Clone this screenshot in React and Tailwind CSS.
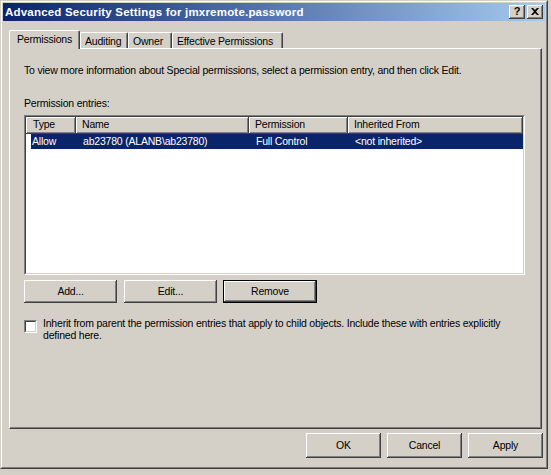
import React from "react";

const raised =
  "shadow-[inset_-1px_-1px_0_#404040,inset_1px_1px_0_#ffffff,inset_-2px_-2px_0_#808080]";

function Button({ label, className = "", isDefault = false }) {
  return (
    <div
      className={`flex items-center justify-center bg-[#d4d0c8] ${raised} ${
        isDefault ? "border border-black" : ""
      } ${className}`}
    >
      <span className="leading-[13px]">{label}</span>
    </div>
  );
}

function Tab({ label, selected, w }) {
  return (
    <div
      className={`relative flex bg-[#d4d0c8] border-t border-l border-white border-r border-r-[#404040] rounded-tl-[2px] rounded-tr-[2px] shadow-[inset_-1px_0_0_#808080] ${
        selected ? "h-[19px] -mb-px z-10 pl-[7px] pt-[2px]" : "h-[16px] pl-[4px] pt-[2px]"
      }`}
      style={{ width: w }}
    >
      <span className="leading-[13px]">{label}</span>
    </div>
  );
}

function HeaderCell({ label, w, pl = "pl-[6px]" }) {
  return (
    <div
      className={`h-[17px] shrink-0 flex items-start pt-[1px] ${pl} bg-[#d4d0c8] ${raised}`}
      style={{ width: w }}
    >
      <span className="leading-[13px]">{label}</span>
    </div>
  );
}

export default function App() {
  return (
    <div className="w-[551px] h-[475px] bg-[#d4d0c8] font-['Liberation_Sans',Arial,sans-serif] text-[10.5px] tracking-[-0.2px] text-black">
      {/* window frame */}
      <div className="w-[548px] h-[469px] border-t border-l border-[#d4d0c8] border-r border-b border-r-[#404040] border-b-[#404040]">
        <div className="h-full border-t border-l border-white border-r border-b border-r-[#808080] border-b-[#808080] p-px flex flex-col">
          {/* title bar */}
          <div className="h-[18px] flex items-center pl-[2px] pr-[2px] bg-[linear-gradient(to_right,#0a246a,#a6caf0)]">
            <span className="text-white font-bold text-[11.5px] leading-[13px] tracking-[0.2px]">
              Advanced Security Settings for jmxremote.password
            </span>
            <div className="ml-auto flex gap-[2px]">
              <div className={`w-[16px] h-[14px] bg-[#d4d0c8] ${raised} flex items-center justify-center`}>
                <span className="font-bold text-[11px] leading-[11px] -mt-px">?</span>
              </div>
              <div className={`w-[16px] h-[14px] bg-[#d4d0c8] ${raised} flex items-center justify-center`}>
                <svg width="8" height="7" viewBox="0 0 8 7" className="-mt-px">
                  <path d="M0 0h2l2 2 2-2h2L5 3.5 8 7H6L4 5 2 7H0l3-3.5z" fill="#000" />
                </svg>
              </div>
            </div>
          </div>

          {/* tabs */}
          <div className="ml-[6px] mt-[9px] h-[18px] flex items-end">
            <Tab label="Permissions" selected w={71} />
            <Tab label="Auditing" w={48} />
            <Tab label="Owner" w={44} />
            <Tab label="Effective Permissions" w={111} />
          </div>

          {/* tab page */}
          <div className="ml-[6px] w-[533px] h-[381px] border-t border-l border-white border-r border-b border-r-[#404040] border-b-[#404040]">
            <div className="h-full border-r border-b border-r-[#808080] border-b-[#808080] pl-[14px] pt-[15px]">
              <div className="leading-[13px]">
                To view more information about Special permissions, select a permission entry, and then click Edit.
              </div>
              <div className="leading-[13px] mt-[20px]">Permission entries:</div>

              {/* list view */}
              <div className="mt-[5px] w-[501px] h-[160px] border-t border-l border-[#808080] border-r border-b border-r-white border-b-white">
                <div className="h-full border-t border-l border-[#404040] border-r border-b border-r-[#d4d0c8] border-b-[#d4d0c8] bg-white">
                  <div className="flex">
                    <HeaderCell label="Type" w={50} pl="pl-[7px]" />
                    <HeaderCell label="Name" w={173} />
                    <HeaderCell label="Permission" w={99} />
                    <HeaderCell label="Inherited From" w={175} />
                  </div>
                  <div className="flex h-[15px] items-start">
                    <div className="w-[5px] h-full bg-white shrink-0" />
                    <div className="flex-1 h-full bg-[#0a246a] text-white flex items-start pt-px">
                      <span className="w-[45px] pl-[1px] shrink-0 leading-[13px]">Allow</span>
                      <span className="w-[173px] pl-[7px] shrink-0 leading-[13px]">ab23780 (ALANB\ab23780)</span>
                      <span className="w-[99px] pl-[7px] shrink-0 leading-[13px]">Full Control</span>
                      <span className="pl-[7px] leading-[13px]">&lt;not inherited&gt;</span>
                    </div>
                  </div>
                </div>
              </div>

              {/* action buttons */}
              <div className="mt-[5px] flex items-start">
                <Button label="Add..." className="w-[93px] h-[23px]" />
                <Button label="Edit..." className="w-[93px] h-[23px] ml-[7px]" />
                <Button label="Remove" isDefault className="w-[94px] h-[23px] ml-[6px]" />
              </div>

              {/* inherit option */}
              <div className="mt-[14px] flex items-start">
                <div className="mt-[3px] w-[13px] h-[13px] shrink-0 border-t border-l border-[#808080] border-r border-b border-r-white border-b-white">
                  <div className="h-full border-t border-l border-[#404040] border-r border-b border-r-[#d4d0c8] border-b-[#d4d0c8] bg-white" />
                </div>
                <div className="ml-[6px] leading-[12px] whitespace-nowrap">
                  Inherit from parent the permission entries that apply to child objects. Include these with entries explicitly
                  <br />
                  defined here.
                </div>
              </div>
            </div>
          </div>

          {/* dialog buttons */}
          <div className="mt-[4px] flex justify-end pr-[2px]">
            <Button label="OK" className="w-[75px] h-[25px]" />
            <Button label="Cancel" className="w-[75px] h-[25px] ml-[6px]" />
            <Button label="Apply" className="w-[75px] h-[25px] ml-[6px]" />
          </div>
        </div>
      </div>
    </div>
  );
}
